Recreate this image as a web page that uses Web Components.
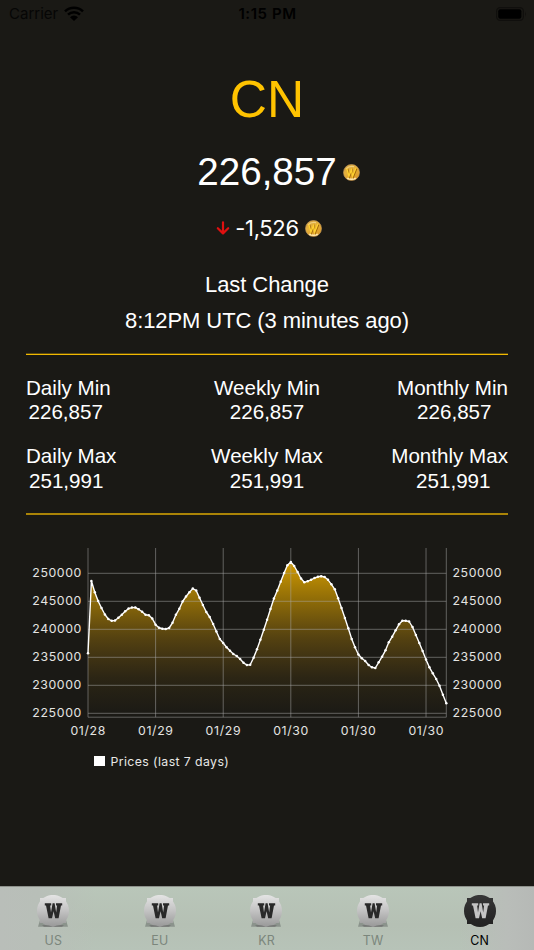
<!DOCTYPE html>
<html lang="en">
<head>
<meta charset="utf-8">
<meta name="viewport" content="width=device-width, initial-scale=1">
<title>Token Prices</title>
<style>
    html, body {
        margin: 0;
        height: 100%;
        background: #1a1915;
    }
</style>
</head>
<body>
<token-app></token-app>

<script>
class StatusBar extends HTMLElement {
    constructor() {
        super();
        this.attachShadow({mode: "open"}).innerHTML = `
            <style>
                :host {
                    display: grid;
                    grid-template-columns: 1fr auto 1fr;
                    align-items: center;
                    height: 28px;
                    padding: 0 7px 0 9px;
                    font: 15px/28px Inter, sans-serif;
                    color: #000;
                }
                .left { display: flex; align-items: center; gap: 6px; color: #060605; }
                .time { font-weight: 600; letter-spacing: 0.55px; margin-left: -1px; }
                .battery { justify-self: end; }
                svg { display: block; }
                .wifi { margin-top: -2px; }
            </style>
            <div class="left">
                <span>Carrier</span>
                <svg class="wifi" width="20" height="15" viewBox="0 0 20 15">
                    <path d="M1 5.3a13 13 0 0 1 18 0M4 8.6a8.7 8.7 0 0 1 12 0" fill="none" stroke="#000" stroke-width="2.5"/>
                    <path d="M6 11.2a5.8 5.8 0 0 1 8 0L10 15z"/>
                </svg>
            </div>
            <span class="time">1:15 PM</span>
            <svg class="battery" width="31" height="14" viewBox="0 0 31 14">
                <rect x=".6" y=".6" width="26.8" height="12.8" rx="3.6" fill="none" stroke="#100f0d" stroke-width="1.2"/>
                <rect x="2.2" y="2.2" width="23.2" height="9.6" rx="2"/>
                <path d="M29 4.6q1.8 2.4 0 4.8z" fill="#100f0d"/>
            </svg>
        `;
    }
}
customElements.define("status-bar", StatusBar);

class GoldCoin extends HTMLElement {
    constructor() {
        super();
        this.attachShadow({mode: "open"}).innerHTML = `
            <style>
                :host { display: block; width: 17px; height: 17px; }
                svg { display: block; }
            </style>
            <svg width="17" height="17" viewBox="0 0 17 17">
                <defs>
                    <linearGradient id="face" x1="0" y1="0" x2=".6" y2="1">
                        <stop offset="0" stop-color="#cf9c3a"/>
                        <stop offset=".45" stop-color="#e6b23c"/>
                        <stop offset="1" stop-color="#dc9a28"/>
                    </linearGradient>
                </defs>
                <circle cx="8.5" cy="8.5" r="8" fill="url(#face)" stroke="#c0965a" stroke-width=".7"/>
                <path d="M3 5Q6 1.6 11 2.6" fill="none" stroke="#f0d080" stroke-width="1.2"/>
                <path d="M4.2 14.2q4.3 2 8.6 0" fill="none" stroke="#ffe9b0" stroke-width="1.5"/>
                <path d="M4.6 5L6.6 12.6 8.9 6.4 10.4 12.6 13.6 4.8" fill="none" stroke="#a06808" stroke-width="1.5"/>
                <path d="M3.8 4.4L5.9 12 8.4 5.8 9.7 12 12.8 4.2" fill="none" stroke="#ffd030" stroke-width="1.4"/>
            </svg>
        `;
    }
}
customElements.define("gold-coin", GoldCoin);

class PriceHeader extends HTMLElement {
    constructor() {
        super();
        this.attachShadow({mode: "open"}).innerHTML = `
            <style>
                :host { display: flex; flex-direction: column; align-items: center; color: #fff; }
                .region { font-size: 51.5px; line-height: 70px; margin-top: 36px; color: #ffc300; }
                .price { display: flex; align-items: center; gap: 6px; height: 48px; margin: 14px 0 0 23px; font-size: 38.6px; line-height: 48px; }
                .change { display: flex; align-items: center; height: 32px; margin: 16px 0 0 4px; font: 22px/32px Inter, sans-serif; }
                .change span { margin: 0 6px 0 5px; letter-spacing: -0.35px; }
                .line { font-size: 22px; line-height: 36px; letter-spacing: -0.08px; white-space: nowrap; }
                .first { margin-top: 23px; }
            </style>
            <div class="region">CN</div>
            <div class="price"><span>226,857</span><gold-coin></gold-coin></div>
            <div class="change">
                <svg width="14" height="14" viewBox="0 0 14 14">
                    <path d="M7 1.3v11M1.8 7.2L7 12.4l5.2-5.2" fill="none" stroke="#e01010" stroke-width="2.2" stroke-linecap="round" stroke-linejoin="round"/>
                </svg>
                <span>-1,526</span>
                <gold-coin></gold-coin>
            </div>
            <div class="line first">Last Change</div>
            <div class="line">8:12PM UTC (3 minutes ago)</div>
        `;
    }
}
customElements.define("price-header", PriceHeader);

class StatCell extends HTMLElement {
    constructor() {
        super();
        this.attachShadow({mode: "open"}).innerHTML = `
            <style>
                :host {
                    display: flex;
                    flex-direction: column;
                    align-items: center;
                    font-size: 20.6px;
                    line-height: 24.4px;
                    white-space: nowrap;
                }
                :host([side="left"]) { align-items: flex-start; }
                :host([side="right"]) { align-items: flex-end; }
                :host([side="left"]) .value { margin-left: var(--inset, 2.5px); }
                :host([side="right"]) .value { margin-right: var(--inset, 16.5px); }
            </style>
            <slot></slot>
            <div class="value"><slot name="value"></slot></div>
        `;
    }
}
customElements.define("stat-cell", StatCell);

class StatGrid extends HTMLElement {
    constructor() {
        super();
        this.attachShadow({mode: "open"}).innerHTML = `
            <style>
                :host {
                    display: grid;
                    grid-template-columns: 1fr 1fr 1fr;
                    row-gap: 20px;
                    margin: 14px 26px 0;
                    color: #fff;
                }
                .rule { grid-column: 1 / -1; height: 2px; background: #aa8407; }
                .top { background: linear-gradient(#5c4a10 50%, #f0b800 50%); margin-bottom: 0.6px; }
            </style>
            <div class="rule top"></div>
            <stat-cell side="left">Daily Min<span slot="value">226,857</span></stat-cell>
            <stat-cell>Weekly Min<span slot="value">226,857</span></stat-cell>
            <stat-cell side="right">Monthly Min<span slot="value">226,857</span></stat-cell>
            <stat-cell side="left" style="--inset: 3px">Daily Max<span slot="value">251,991</span></stat-cell>
            <stat-cell>Weekly Max<span slot="value">251,991</span></stat-cell>
            <stat-cell side="right" style="--inset: 17.5px">Monthly Max<span slot="value">251,991</span></stat-cell>
            <div class="rule"></div>
        `;
    }
}
customElements.define("stat-grid", StatGrid);

// distance of every sample from the top of the plot
const samples = [
    105.3, 33, 44.3, 53, 60, 66.5, 71, 72.8, 72.5, 69.8, 66.7, 63.2, 60.6, 59.6, 59.4, 61.3, 63.7, 66.8, 67.2, 70.4,
    76.7, 79.8, 80.7, 81, 80, 74.8, 66.8, 60.8, 53.5, 48.5, 44.3, 40.6, 42.5, 49.8, 57, 64, 69, 76, 83.5, 91,
    95, 99.2, 102.8, 106, 108, 111, 114.8, 117, 116.8, 109.8, 101.2, 91.8, 81.8, 71.7, 61, 50.5, 42.5, 33.7, 25, 17.2,
    14, 18, 24, 30.5, 34.3, 33.2, 31.8, 30, 28.8, 28.3, 29, 31.8, 36.3, 41.3, 50.3, 60, 70, 80.3, 91, 99.3,
    106.5, 110.3, 113, 117, 119.3, 120, 114.3, 108.7, 102.3, 94.3, 88.7, 82.3, 76.3, 72.8, 72.8, 73.5, 79, 87, 95, 103,
    111.6, 119.3, 125.3, 131, 137.7, 146.7, 155.3
];

class PriceChart extends HTMLElement {
    constructor() {
        super();
        this._shadowRoot = this.attachShadow({mode: "open"});
    }
    connectedCallback() {
        this.render();
    }
    render() {
        const left = 88, right = 446.3, top = 8, bottom = 177.2;
        const step = (right - left) / (samples.length - 1);
        const points = samples.map((y, i) => [(left + i * step).toFixed(1), (top + y).toFixed(1)]);
        const line = "M" + points.map(p => p.join(" ")).join("L");
        const dates = ["01/28", "01/29", "01/29", "01/30", "01/30", "01/30"];
        let grid = "";
        let labels = "";
        for (let i = 0; i < 6; i++) {
            const y = 33.3 + i * 28;
            const price = 250000 - i * 5000;
            grid += `<path d="M${left} ${y}H${right}"/>`;
            labels += `<text x="32.3" y="${y + 3.8}" textLength="49">${price}</text>`;
            labels += `<text x="452.5" y="${y + 3.8}" textLength="49">${price}</text>`;
        }
        dates.forEach((date, i) => {
            const x = left + i * step * 20;
            grid += `<path d="M${x} ${top}V${bottom}"/>`;
            labels += `<text x="${x - 17.6}" y="195.3" textLength="35">${date}</text>`;
        });
        this._shadowRoot.innerHTML = `
            <style>
                :host { display: block; }
                svg { display: block; }
                text, .legend { font: 12.3px Inter, sans-serif; fill: #e4e4e2; color: #e8e8e6; }
                .legend { display: flex; align-items: center; gap: 6px; height: 20px; margin: 9px 0 0 94px; letter-spacing: 0.4px; }
                .legend i { width: 10.5px; height: 10.5px; background: #fff; }
            </style>
            <svg width="534" height="202" viewBox="0 0 534 202">
                <defs>
                    <linearGradient id="fill" gradientUnits="userSpaceOnUse" x1="0" y1="20" x2="0" y2="177">
                        <stop offset="0" stop-color="#e0a500" stop-opacity=".95"/>
                        <stop offset=".25" stop-color="#d09a00" stop-opacity=".65"/>
                        <stop offset=".5" stop-color="#c08c08" stop-opacity=".35"/>
                        <stop offset=".75" stop-color="#b08010" stop-opacity=".12"/>
                        <stop offset="1" stop-color="#a07810" stop-opacity="0"/>
                    </linearGradient>
                </defs>
                <path d="${line}V${bottom}H${left}Z" fill="url(#fill)"/>
                <g stroke="#aaa" stroke-opacity=".5" stroke-width="1" fill="none">
                    ${grid}
                    <path d="M${left} ${bottom}H${right}V${top}"/>
                </g>
                <path d="${line}" fill="none" stroke="#fff" stroke-width="1.4" stroke-linejoin="round"/>
                <g fill="#fff">${points.map(p => `<circle cx="${p[0]}" cy="${p[1]}" r="1.25"/>`).join("")}</g>
                ${labels}
            </svg>
            <div class="legend"><i></i><span>Prices (last 7 days)</span></div>
        `;
    }
}
customElements.define("price-chart", PriceChart);

class RegionTab extends HTMLElement {
    constructor() {
        super();
        this._shadowRoot = this.attachShadow({mode: "open"});
    }
    connectedCallback() {
        const active = this.hasAttribute("active");
        const ink = active ? "#c4c4c4" : "#292929";
        this._shadowRoot.innerHTML = `
            <style>
                :host {
                    display: flex;
                    flex-direction: column;
                    align-items: center;
                    padding-top: 8px;
                    font: 12.4px/16px Inter, sans-serif;
                    letter-spacing: 0.2px;
                    color: #7b867c;
                }
                :host([active]) { color: #000; }
                svg { display: block; margin-bottom: 5px; }
            </style>
            <svg width="34" height="33" viewBox="0 0 34 33">
                <defs>
                    <linearGradient id="disc" gradientUnits="userSpaceOnUse" x1="0" y1="0" x2="0" y2="32">
                        <stop offset="0" stop-color="${active ? "#383838" : "#e4e4e4"}"/>
                        <stop offset=".5" stop-color="${active ? "#2b2b2b" : "#c2c2c2"}"/>
                        <stop offset="1" stop-color="${active ? "#222" : "#989898"}"/>
                    </linearGradient>
                </defs>
                ${active
                    ? `<path d="M4 3h26v26H4z" fill="url(#disc)"/>`
                    : `<path d="M4 25L2 31.8h30L30 25z" fill="#8b938c"/>
                       <path d="M4 3h26v25H4z" fill="url(#disc)"/>`}
                <circle cx="17" cy="15.9" r="16" fill="url(#disc)"/>
                ${active ? "" : `<path d="M6 30.2q5.5-1 11 1.6 5.5-2.6 11-1.6L26 31.8H8z" fill="#757775"/>`}
                <path d="M8.8 8.2h6.4v2.4h-1.1l.9 7L16.6 8.2h2l1.6 9.4.9-7H20V8.2h6.2v2.4H25L22.6 23.3h-3.4l-1.6-7-1.6 7h-3.4L10 10.6H8.8z" fill="${ink}"/>
            </svg>
            <slot></slot>
        `;
    }
}
customElements.define("region-tab", RegionTab);

class TabBar extends HTMLElement {
    constructor() {
        super();
        this.attachShadow({mode: "open"}).innerHTML = `
            <style>
                :host {
                    display: grid;
                    grid-template-columns: repeat(5, 1fr);
                    box-sizing: border-box;
                    height: 64px;
                    padding-right: 1px;
                    border-top: 1px solid #8e918b;
                    background:
                        linear-gradient(90deg, #b9beb9 0, #b8bfb8 7%, #b8c3b800 18%, #b8c3b800 86%, #b9bdb9 95%, #b6b9b6),
                        linear-gradient(#b9c6b9, #b5c0b4 60%, #b7c3b8);
                }
            </style>
            <slot></slot>
        `;
    }
}
customElements.define("tab-bar", TabBar);

class TokenApp extends HTMLElement {
    constructor() {
        super();
        this.attachShadow({mode: "open"}).innerHTML = `
            <style>
                :host {
                    display: flex;
                    flex-direction: column;
                    height: 950px;
                    overflow: hidden;
                    background: #1a1915;
                    font-family: "Liberation Sans", Arial, sans-serif;
                }
                price-chart { margin-top: 25px; }
                tab-bar { margin-top: auto; }
            </style>
            <status-bar></status-bar>
            <price-header></price-header>
            <stat-grid></stat-grid>
            <price-chart></price-chart>
            <tab-bar>
                <region-tab>US</region-tab>
                <region-tab>EU</region-tab>
                <region-tab>KR</region-tab>
                <region-tab>TW</region-tab>
                <region-tab active>CN</region-tab>
            </tab-bar>
        `;
    }
}
customElements.define("token-app", TokenApp);
</script>
</body>
</html>
